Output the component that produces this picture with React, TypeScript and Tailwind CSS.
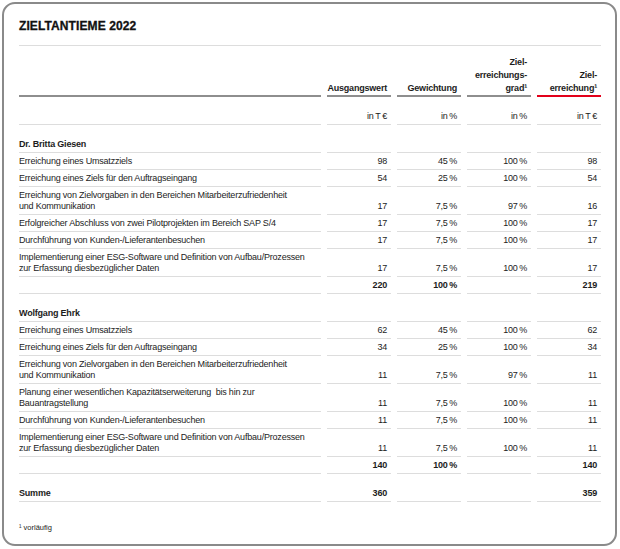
import React from "react";

type Row = {
  label: React.ReactNode;
  a?: string;
  b?: string;
  c?: string;
  d?: string;
  kind?: "normal" | "sum" | "head" | "total";
};

const GRID = "grid grid-cols-[302px_64px_64px_64px_64px] gap-x-[6px]";
const P = (n: string) => `${n}\u2009%`;

const giesen: Row[] = [
  { label: "Dr. Britta Giesen", kind: "head" },
  { label: "Erreichung eines Umsatzziels", a: "98", b: P("45"), c: P("100"), d: "98" },
  { label: "Erreichung eines Ziels für den Auftragseingang", a: "54", b: P("25"), c: P("100"), d: "54" },
  {
    label: (
      <>
        Erreichung von Zielvorgaben in den Bereichen Mitarbeiterzufriedenheit
        <br />
        und Kommunikation
      </>
    ),
    a: "17",
    b: P("7,5"),
    c: P("97"),
    d: "16",
  },
  { label: "Erfolgreicher Abschluss von zwei Pilotprojekten im Bereich SAP S/4", a: "17", b: P("7,5"), c: P("100"), d: "17" },
  { label: "Durchführung von Kunden-/Lieferantenbesuchen", a: "17", b: P("7,5"), c: P("100"), d: "17" },
  {
    label: (
      <>
        Implementierung einer ESG-Software und Definition von Aufbau/Prozessen
        <br />
        zur Erfassung diesbezüglicher Daten
      </>
    ),
    a: "17",
    b: P("7,5"),
    c: P("100"),
    d: "17",
  },
  { label: "", a: "220", b: P("100"), c: "", d: "219", kind: "sum" },
];

const ehrk: Row[] = [
  { label: "Wolfgang Ehrk", kind: "head" },
  { label: "Erreichung eines Umsatzziels", a: "62", b: P("45"), c: P("100"), d: "62" },
  { label: "Erreichung eines Ziels für den Auftragseingang", a: "34", b: P("25"), c: P("100"), d: "34" },
  {
    label: (
      <>
        Erreichung von Zielvorgaben in den Bereichen Mitarbeiterzufriedenheit
        <br />
        und Kommunikation
      </>
    ),
    a: "11",
    b: P("7,5"),
    c: P("97"),
    d: "11",
  },
  {
    label: (
      <>
        Planung einer wesentlichen Kapazitätserweiterung&nbsp; bis hin zur
        <br />
        Bauantragstellung
      </>
    ),
    a: "11",
    b: P("7,5"),
    c: P("100"),
    d: "11",
  },
  { label: "Durchführung von Kunden-/Lieferantenbesuchen", a: "11", b: P("7,5"), c: P("100"), d: "11" },
  {
    label: (
      <>
        Implementierung einer ESG-Software und Definition von Aufbau/Prozessen
        <br />
        zur Erfassung diesbezüglicher Daten
      </>
    ),
    a: "11",
    b: P("7,5"),
    c: P("100"),
    d: "11",
  },
  { label: "", a: "140", b: P("100"), c: "", d: "140", kind: "sum" },
  { label: "Summe", a: "360", b: "", c: "", d: "359", kind: "total" },
];

function TableRow({ row }: { row: Row }) {
  const tall = row.kind === "head" || row.kind === "total";
  const bold = row.kind === "sum" || row.kind === "total" || row.kind === "head";
  const pad = tall ? "pt-[14px] pb-[2px]" : "pt-[3px] pb-[2px]";
  const weight = bold ? "font-bold" : "font-normal";
  const vals = [row.a, row.b, row.c, row.d];
  return (
    <div className={GRID}>
      <div className={`flex items-end border-b border-[#dddddd] leading-[11px] whitespace-nowrap ${pad} ${weight}`}>
        <span>{row.label}</span>
      </div>
      {vals.map((v, i) => (
        <div
          key={i}
          className={`flex items-end justify-end border-b border-[#dddddd] pr-[4px] leading-[11px] whitespace-nowrap ${pad} ${weight}`}
        >
          <span>{v ?? ""}</span>
        </div>
      ))}
    </div>
  );
}

export default function App() {
  return (
    <div className="w-[620px] h-[549px] bg-white p-[2px] font-['Liberation_Sans',Arial,sans-serif] text-[#1c1c1c]">
      <div className="h-[544px] w-[615px] rounded-[13px] border-2 border-[#8a8a8a] bg-white pl-[15px] pr-[14px] pt-[15px] text-[9px] tracking-[-0.2px]">
        <div className="border-b border-[#dddddd] pb-[12px]">
          <h1 className="text-[12px] font-bold leading-[14px] tracking-[0.1px] text-[#111] [-webkit-text-stroke:0.3px_#111]">
            ZIELTANTIEME 2022
          </h1>
        </div>

        {/* Header */}
        <div className={`${GRID} h-[51px]`}>
          <div className="border-b-2 border-[#8e8e8e]" />
          <div className="flex items-end justify-end border-b-2 border-[#8e8e8e] pb-[0px] pr-[4px] text-right font-bold leading-[13px]">
            Ausgangswert
          </div>
          <div className="flex items-end justify-end border-b-2 border-[#8e8e8e] pb-[0px] pr-[4px] text-right font-bold leading-[13px]">
            Gewichtung
          </div>
          <div className="flex items-end justify-end border-b-2 border-[#8e8e8e] pb-[0px] pr-[4px] text-right font-bold leading-[13px]">
            <span>
              Ziel-
              <br />
              erreichungs-
              <br />
              grad¹
            </span>
          </div>
          <div className="flex items-end justify-end border-b-2 border-[#e2001a] pb-[0px] pr-[4px] text-right font-bold leading-[13px]">
            <span>
              Ziel-
              <br />
              erreichung¹
            </span>
          </div>
        </div>

        {/* Units */}
        <div className={GRID}>
          <div className="border-b border-[#dddddd] pt-[14px] pb-[2px] leading-[11px]">&nbsp;</div>
          <div className="flex items-end justify-end border-b border-[#dddddd] pt-[14px] pb-[2px] pr-[4px] leading-[11px]">in{"\u2009"}T{"\u2009"}€</div>
          <div className="flex items-end justify-end border-b border-[#dddddd] pt-[14px] pb-[2px] pr-[4px] leading-[11px]">in{"\u2009"}%</div>
          <div className="flex items-end justify-end border-b border-[#dddddd] pt-[14px] pb-[2px] pr-[4px] leading-[11px]">in{"\u2009"}%</div>
          <div className="flex items-end justify-end border-b border-[#dddddd] pt-[14px] pb-[2px] pr-[4px] leading-[11px]">in{"\u2009"}T{"\u2009"}€</div>
        </div>

        {giesen.map((r, i) => (
          <TableRow key={`g${i}`} row={r} />
        ))}
        {ehrk.map((r, i) => (
          <TableRow key={`e${i}`} row={r} />
        ))}

        <p className="mt-[21px] text-[7.5px] leading-[9px] tracking-[0px]">¹ vorläufig</p>
      </div>
    </div>
  );
}
